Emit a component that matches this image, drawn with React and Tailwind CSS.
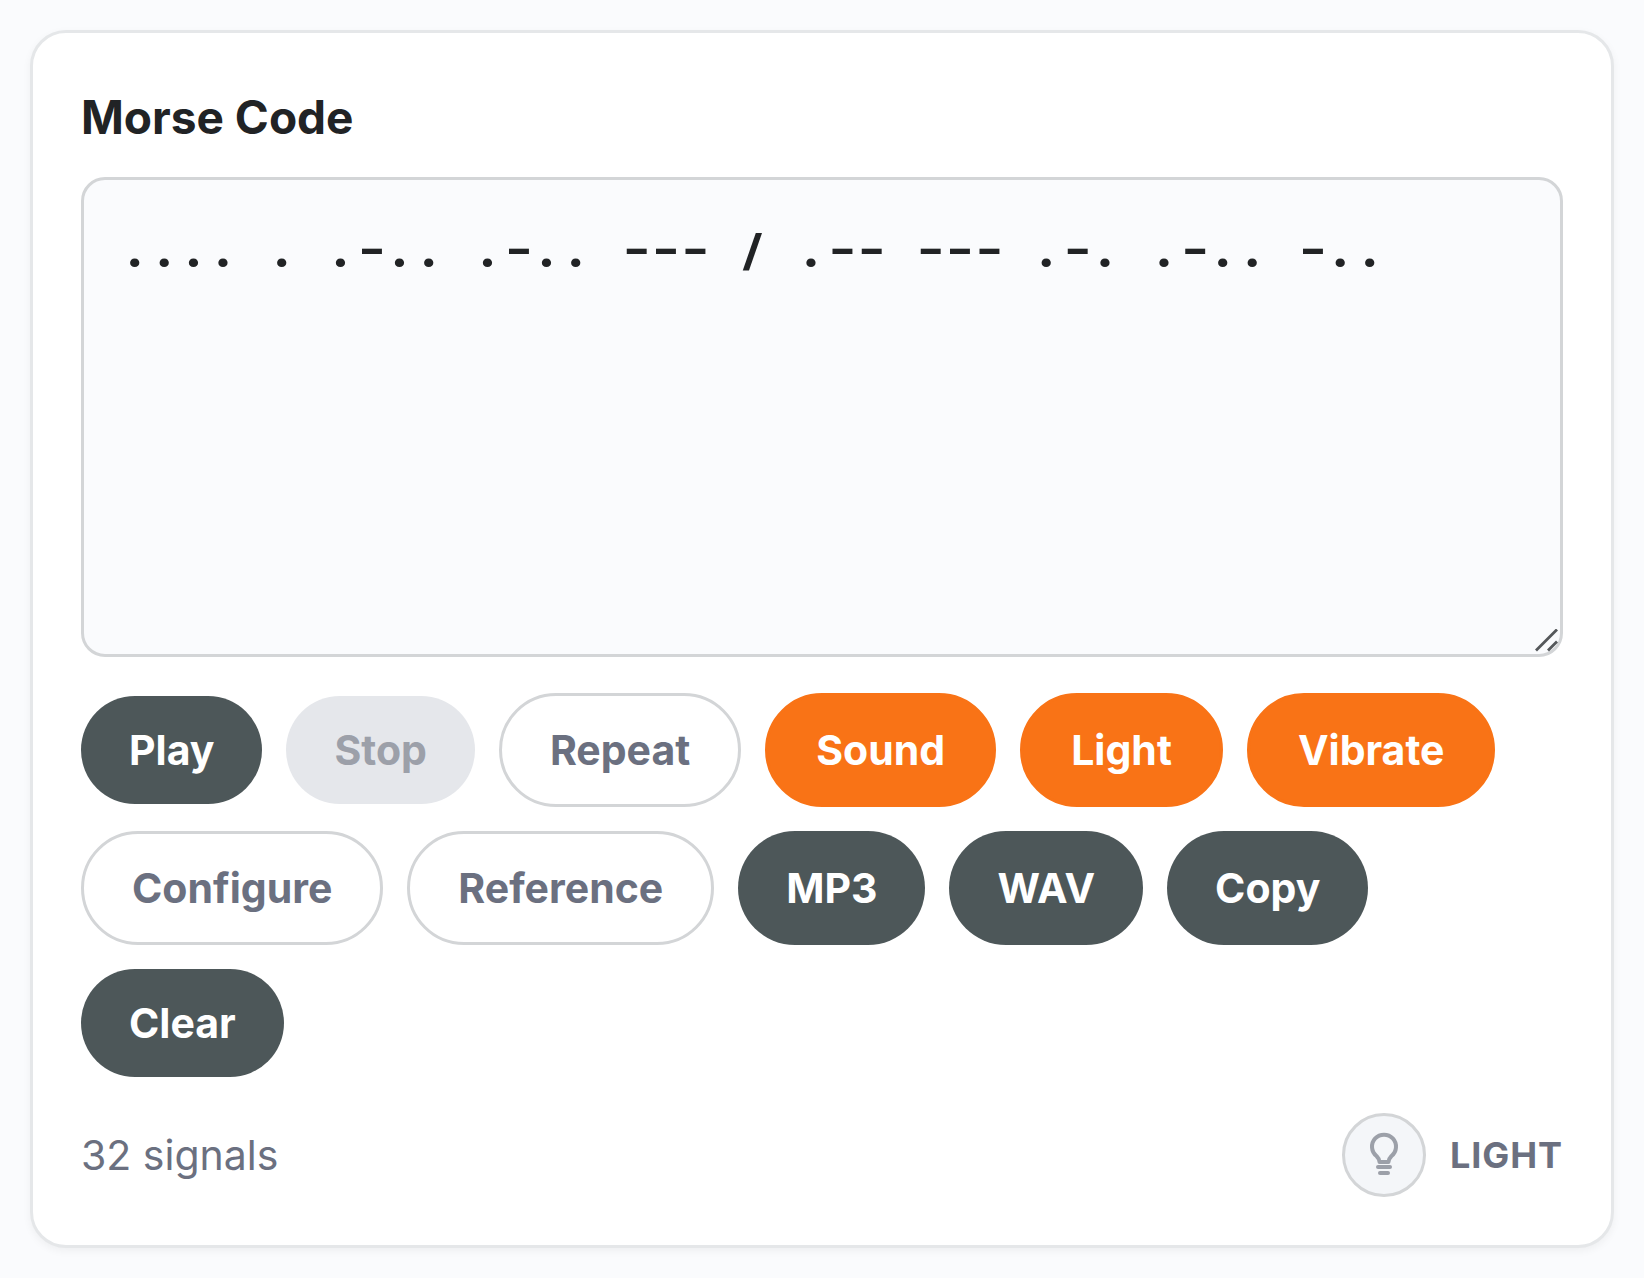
import React, { useState } from "react";

const base =
  "flex items-center justify-center rounded-full px-12 py-[30px] text-[41px] leading-[48px] font-bold whitespace-nowrap";

const styles = {
  primary: "self-center bg-[#4d5759] text-white",
  solid: "bg-[#4d5759] text-white",
  disabled: "self-center bg-[#e5e7eb] text-[#9ca0a9]",
  outline: "border-3 border-[#d3d5d7] bg-white text-[#6b7080]",
  active: "border-3 border-[#f97316] bg-[#f97316] text-white",
};

const buttons = [
  ["Play", "primary"],
  ["Stop", "disabled"],
  ["Repeat", "outline"],
  ["Sound", "active"],
  ["Light", "active"],
  ["Vibrate", "active"],
  ["Configure", "outline"],
  ["Reference", "outline"],
  ["MP3", "solid"],
  ["WAV", "solid"],
  ["Copy", "solid"],
  ["Clear", "solid"],
];

function Bulb() {
  return (
    <svg
      viewBox="0 0 48 48"
      className="size-12"
      fill="none"
      stroke="currentColor"
      strokeWidth="4"
      strokeLinecap="round"
      strokeLinejoin="round"
      aria-hidden="true"
    >
      <path d="M19.5 31C19.5 28.5 18.500 27 16.500 25A12 12 0 1 1 31.500 25C29.500 27 28.500 28.500 28.500 31Z" />
      <path d="M18 36H30" />
      <path d="M20 42H28" />
    </svg>
  );
}

export default function App() {
  const [code, setCode] = useState(".... . .-.. .-.. --- / .-- --- .-. .-.. -..");
  return (
    <main className="min-h-screen bg-[#fafbfd] p-[30px] font-[Inter,sans-serif]">
      <section className="rounded-[36px] border-3 border-[#e5e7e9] bg-white p-12 shadow-[0_3px_9px_rgba(0,0,0,0.05)]">
        <label htmlFor="morse" className="mb-6 block text-[46px] leading-[72px] font-bold text-[#212325]">
          Morse Code
        </label>
        <div className="relative">
          <textarea
            id="morse"
            value={code}
            onChange={(e) => setCode(e.target.value)}
            spellCheck={false}
            className="block h-[480px] w-full resize-none rounded-3xl border-3 border-[#d3d5d7] bg-[#fafbfd] p-9 font-['Roboto_Mono','DejaVu_Sans_Mono',monospace] text-[49px] leading-[64px] font-bold text-[#212325] outline-none"
          />
          <svg
            viewBox="0 0 24 24"
            className="pointer-events-none absolute right-1 bottom-1 size-6"
            fill="none"
            stroke="#55585b"
            strokeWidth="2.8"
            aria-hidden="true"
          >
            <path d="M1 21.500L22 0.500M13 21.500L22 12.500" />
          </svg>
        </div>
        <div className="mt-9 flex flex-wrap gap-6">
          {buttons.map(([label, kind]) => (
            <button key={label} type="button" disabled={kind === "disabled"} className={`${base} ${styles[kind]}`}>
              {label}
            </button>
          ))}
        </div>
        <footer className="mt-9 flex items-center justify-between text-[#6b7080]">
          <p className="text-[41px] leading-[60px]">32 signals</p>
          <div className="flex items-center gap-6">
            <span className="flex size-[84px] items-center justify-center rounded-full border-3 border-[#d3d5d7] bg-[#f4f6f9] text-[#9ca0a9]">
              <Bulb />
            </span>
            <span className="text-[36px] leading-[54px] font-bold tracking-wide uppercase">Light</span>
          </div>
        </footer>
      </section>
    </main>
  );
}
